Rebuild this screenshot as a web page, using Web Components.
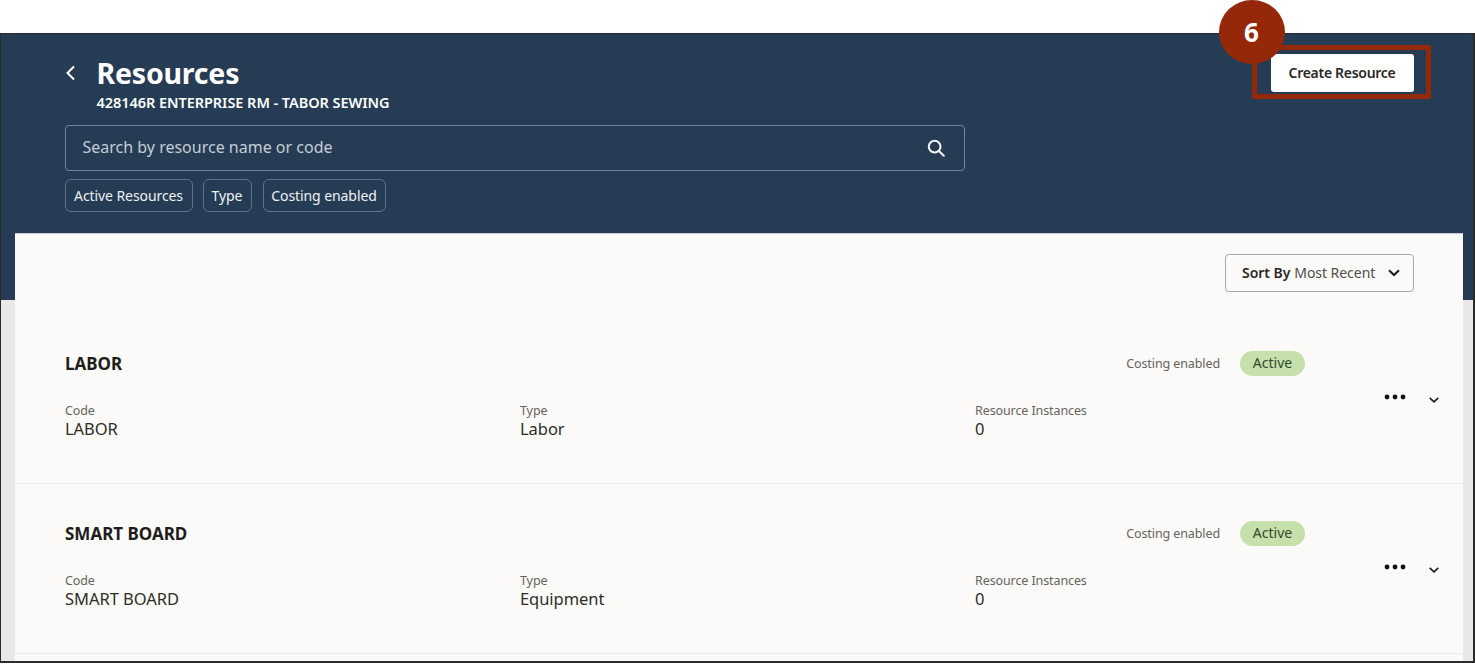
<!DOCTYPE html>
<html lang="en">
<head>
<meta charset="utf-8">
<title>Resources</title>
<style>
  html, body { margin: 0; background: #fff; }
  body { font-family: "Noto Sans", "Open Sans", sans-serif; height: 664px; overflow: hidden; }
</style>
</head>
<body>
<resource-page>
  <resource-header slot="header" heading="Resources" subtitle="428146R ENTERPRISE RM - TABOR SEWING">
    <search-box placeholder="Search by resource name or code"></search-box>
    <filter-chip slot="chips" style="width:128px">Active Resources</filter-chip>
    <filter-chip slot="chips" style="width:49px;margin-left:10px">Type</filter-chip>
    <filter-chip slot="chips" style="width:123px;margin-left:11px">Costing enabled</filter-chip>
  </resource-header>
  <resource-row name="LABOR" code="LABOR" type="Labor" instances="0"></resource-row>
  <resource-row name="SMART BOARD" code="SMART BOARD" type="Equipment" instances="0"></resource-row>
</resource-page>

<script>
class ResourcePage extends HTMLElement {
  constructor() {
    super()
    this.attachShadow({ mode: 'open' })
  }

  connectedCallback() {
    this.shadowRoot.innerHTML = `
      <style>
        :host {
          display: block;
          box-sizing: border-box;
          height: 630px;
          margin-top: 33px;
          width: 1475px;
          border: 1px solid #2b2b2b;
          border-width: 1.5px 2px 2px 1.5px;
          background: linear-gradient(#253c54 0 266px, #e9e8e6 266px);
        }
        #panel {
          box-sizing: border-box;
          margin: 0 10px 0 13.5px;
          background: #fbfaf8;
          border-top: 1px solid #c9cdd2;
          height: 428px;
          overflow: hidden;
        }
        #sort {
          display: flex;
          justify-content: flex-end;
          padding: 20px 49px 22px 0;
        }
      </style>
      <slot name="header"></slot>
      <div id="panel">
        <div id="sort"><sort-menu></sort-menu></div>
        <slot></slot>
      </div>
    `
  }
}

class ResourceHeader extends HTMLElement {
  constructor() {
    super()
    this.attachShadow({ mode: 'open' })
  }

  connectedCallback() {
    this.shadowRoot.innerHTML = `
      <style>
        :host {
          display: block;
          position: relative;
          box-sizing: border-box;
          height: 198.5px;
          padding: 19px 0 0 63.5px;
          color: #fff;
        }
        #top { display: flex; align-items: flex-start; }
        #back { width: 32px; height: 40px; display: flex; align-items: center; }
        h1 { margin: 0; font-size: 28.5px; line-height: 40px; font-weight: 700; letter-spacing: -0.2px; }
        p { margin: -1px 0 0; font-size: 14.5px; line-height: 20px; font-weight: 600; letter-spacing: -0.05px; }
        ::slotted(search-box) { margin-top: 13px; }
        #filters { display: flex; margin-top: 8px; }
        create-button { position: absolute; left: 1269.5px; top: 19.5px; }
        #callout {
          position: absolute;
          left: 1250.5px;
          top: 10.5px;
          box-sizing: border-box;
          width: 179px;
          height: 54px;
          border: 5px solid #942809;
        }
        #badge {
          position: absolute;
          left: 1217.5px;
          top: -34.5px;
          width: 66px;
          height: 64px;
          border-radius: 50%;
          background: #942809;
          color: #fff;
          font-size: 26px;
          font-weight: 700;
          display: flex;
          align-items: center;
          justify-content: center;
        }
      </style>
      <div id="top">
        <div id="back">
          <svg width="11" height="16" viewBox="0 0 11 16" fill="none" stroke="#fff" stroke-width="2"><path d="M9 1.5 2.5 8 9 14.5"/></svg>
        </div>
        <div>
          <h1>${this.getAttribute('heading')}</h1>
          <p>${this.getAttribute('subtitle')}</p>
        </div>
      </div>
      <slot></slot>
      <div id="filters"><slot name="chips"></slot></div>
      <div id="callout"></div>
      <create-button>Create Resource</create-button>
      <div id="badge">6</div>
    `
  }
}

class SearchBox extends HTMLElement {
  constructor() {
    super()
    this.attachShadow({ mode: 'open' })
  }

  connectedCallback() {
    this.shadowRoot.innerHTML = `
      <style>
        :host {
          display: flex;
          align-items: center;
          justify-content: space-between;
          box-sizing: border-box;
          width: 900px;
          height: 46px;
          padding: 0 19px 0 17px;
          border: 1px solid #71859a;
          border-radius: 4px;
          color: #c4ccd4;
          font-size: 16px;
        }
        span { padding-bottom: 2px; }
      </style>
      <span>${this.getAttribute('placeholder')}</span>
      <svg width="18" height="18" viewBox="0 0 20 20" fill="none" stroke="#f2f4f6" stroke-width="2.3"><circle cx="8.5" cy="8.5" r="6.5"/><path d="M13.3 13.3 18.6 18.6" stroke-linecap="round"/></svg>
    `
  }
}

class FilterChip extends HTMLElement {
  constructor() {
    super()
    this.attachShadow({ mode: 'open' })
  }

  connectedCallback() {
    this.shadowRoot.innerHTML = `
      <style>
        :host {
          display: flex;
          align-items: center;
          justify-content: center;
          box-sizing: border-box;
          height: 33px;
          border: 1px solid #5e7388;
          border-radius: 6px;
          color: #eef1f3;
          font-size: 14px;
          white-space: nowrap;
          letter-spacing: -0.08px;
        }
      </style>
      <slot></slot>
    `
  }
}

class CreateButton extends HTMLElement {
  constructor() {
    super()
    this.attachShadow({ mode: 'open' })
  }

  connectedCallback() {
    this.shadowRoot.innerHTML = `
      <style>
        :host {
          display: flex;
          align-items: center;
          justify-content: center;
          box-sizing: border-box;
          width: 143px;
          height: 38px;
          padding-bottom: 1px;
          background: #fff;
          border-radius: 3px;
          color: #2a2825;
          font-size: 14px;
          font-weight: 600;
          letter-spacing: -0.3px;
        }
      </style>
      <slot></slot>
    `
  }
}

class SortMenu extends HTMLElement {
  constructor() {
    super()
    this.attachShadow({ mode: 'open' })
  }

  connectedCallback() {
    this.shadowRoot.innerHTML = `
      <style>
        :host {
          display: flex;
          align-items: center;
          box-sizing: border-box;
          width: 189px;
          height: 38px;
          padding: 0 13px 0 16px;
          border: 1px solid #a9a7a4;
          border-radius: 4px;
          color: #4f4c49;
          font-size: 14px;
          letter-spacing: -0.05px;
          white-space: nowrap;
        }
        b { color: #2a2825; font-weight: 600; margin-right: 4px; }
        svg { margin-left: auto; }
      </style>
      <b>Sort By</b> Most Recent
      <svg width="12" height="8" viewBox="0 0 12 8" fill="none" stroke="#1f1d1b" stroke-width="2"><path d="M1 1.2 6 6l5-4.8"/></svg>
    `
  }
}

class StatusPill extends HTMLElement {
  constructor() {
    super()
    this.attachShadow({ mode: 'open' })
  }

  connectedCallback() {
    this.shadowRoot.innerHTML = `
      <style>
        :host {
          display: flex;
          align-items: center;
          justify-content: center;
          box-sizing: border-box;
          width: 65px;
          height: 25px;
          padding-bottom: 1px;
          border-radius: 13px;
          background: #c6e0ac;
          color: #2f4a2c;
          font-size: 14px;
        }
      </style>
      <slot></slot>
    `
  }
}

class ResourceRow extends HTMLElement {
  constructor() {
    super()
    this.attachShadow({ mode: 'open' })
  }

  connectedCallback() {
    let field = (label, value) => `
      <div class="field"><label>${label}</label><span>${value}</span></div>`
    this.shadowRoot.innerHTML = `
      <style>
        :host {
          display: block;
          position: relative;
          box-sizing: border-box;
          height: 170px;
          padding: 37px 0 0 50.5px;
          border-bottom: 1.5px solid #ecebe9;
          color: #1f1d1b;
        }
        #head {
          display: flex;
          align-items: center;
          height: 25px;
          padding-right: 158px;
        }
        h2 { margin: 0; font-size: 17px; font-weight: 700; }
        #costing {
          margin-left: auto;
          margin-right: 20px;
          font-size: 12.5px;
          color: #66625f;
          letter-spacing: -0.1px;
        }
        #fields {
          display: grid;
          grid-template-columns: repeat(3, 455px);
          margin-top: 27.5px;
        }
        .field { display: flex; flex-direction: column; }
        label { font-size: 12.5px; line-height: 15px; color: #66625f; letter-spacing: -0.1px; }
        .field span { font-size: 16.5px; line-height: 22px; color: #2f2d2a; letter-spacing: -0.05px; }
        #actions {
          position: absolute;
          left: 1369px;
          top: 78px;
          display: flex;
          align-items: center;
        }
        #actions svg:last-child { margin-left: 23px; margin-top: 5px; }
      </style>
      <div id="head">
        <h2>${this.getAttribute('name')}</h2>
        <span id="costing">Costing enabled</span>
        <status-pill>Active</status-pill>
      </div>
      <div id="fields">
        ${field('Code', this.getAttribute('code'))}
        ${field('Type', this.getAttribute('type'))}
        ${field('Resource Instances', this.getAttribute('instances'))}
      </div>
      <div id="actions">
        <svg width="22" height="6" viewBox="0 0 22 6" fill="#111"><circle cx="3" cy="3" r="2.4"/><circle cx="11" cy="3" r="2.4"/><circle cx="19" cy="3" r="2.4"/></svg>
        <svg width="10" height="6" viewBox="0 0 10 6" fill="none" stroke="#1f1d1b" stroke-width="1.6"><path d="M.7.8 5 4.8 9.3.8"/></svg>
      </div>
    `
  }
}

customElements.define('resource-page', ResourcePage)
customElements.define('resource-header', ResourceHeader)
customElements.define('search-box', SearchBox)
customElements.define('filter-chip', FilterChip)
customElements.define('create-button', CreateButton)
customElements.define('sort-menu', SortMenu)
customElements.define('status-pill', StatusPill)
customElements.define('resource-row', ResourceRow)
</script>
</body>
</html>
